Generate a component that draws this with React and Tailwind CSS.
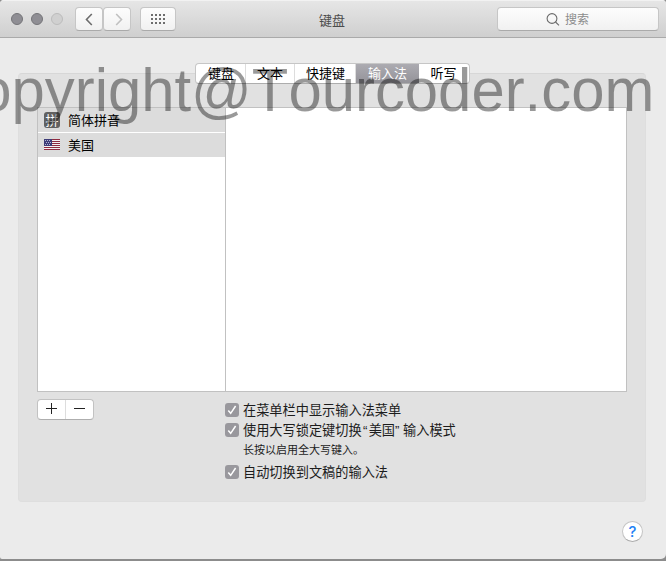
const buttonBase =
  'flex items-center justify-center rounded-[4px] border border-[#c6c6c6] border-b-[#aaaaaa] bg-gradient-to-b from-[#fdfdfd] to-[#f1f1f1]';

function Toolbar() {
  return (
    <header className="flex h-[38px] shrink-0 items-center border-t border-b border-t-[#f2f2f2] border-b-[#aaaaaa] bg-gradient-to-b from-[#e6e6e6] to-[#cfcfcf]">
      <div className="ml-[11px] flex gap-2">
        <span className="size-3 rounded-full border border-[#747478] bg-[#8f8e94]" />
        <span className="size-3 rounded-full border border-[#747478] bg-[#8f8e94]" />
        <span className="size-3 rounded-full border border-[#bcbcbc] bg-[#d0d0d0]" />
      </div>
      <div className="ml-3 flex">
        <button className={`${buttonBase} h-6 w-[28px]`}>
          <svg className="-ml-px" width="8" height="13" viewBox="0 0 8 13" fill="none" stroke="#6d6d6d" strokeWidth="1.6">
            <path d="M6.8 1L1.5 6.5L6.8 12" />
          </svg>
        </button>
        <button className={`${buttonBase} h-6 w-[28px]`}>
          <svg className="ml-[3px]" width="8" height="13" viewBox="0 0 8 13" fill="none" stroke="#c0c0c0" strokeWidth="1.6">
            <path d="M1.2 1L6.5 6.5L1.2 12" />
          </svg>
        </button>
      </div>
      <button className={`${buttonBase} ml-[9px] h-6 w-9`}>
        <svg width="14" height="10" viewBox="0 0 14 10" fill="#6d6d6d">
          {[0, 4, 8].map((y) => [0, 4, 8, 12].map((x) => <rect key={`${x}-${y}`} x={x} y={y} width="2" height="2" />))}
        </svg>
      </button>
      <h1 className="ml-[143px] flex-1 pt-[3px] text-[13px] leading-5 text-[#4c4c4c]">键盘</h1>
      <div className={`${buttonBase} mr-[7px] h-6 w-[162px] pr-[21px] text-[12px] text-[#8c8c8c]`}>
        <svg className="mr-[5px]" width="14" height="13" viewBox="0 0 14 13" fill="none" stroke="#6a6a6a" strokeWidth="1.1">
          <circle cx="6" cy="5.5" r="4.9" />
          <path d="M9.5 9L13 12.4" />
        </svg>
        <span className="pt-[2px]">搜索</span>
      </div>
    </header>
  );
}

function Tabs() {
  const cell = 'flex h-full items-center justify-center border-r border-[#dddddd]';
  return (
    <nav className="z-10 mx-auto flex h-[21px] w-[275px] shrink-0 overflow-hidden rounded-[4px] border border-[#c6c6c6] border-b-[#adadad] bg-white text-[13px]">
      <div className={`${cell} w-[50px] pl-[2px]`}>键盘</div>
      <div className={`${cell} w-[49px] pl-px`}>文本</div>
      <div className={`${cell} w-[61px] pl-[2px]`}>快捷键</div>
      <div className="flex h-full w-[63px] items-center justify-center bg-gradient-to-b from-[#acabb1] to-[#949399] pl-px text-white">输入法</div>
      <div className="flex h-full flex-1 items-center justify-center">听写</div>
    </nav>
  );
}

function PinyinIcon() {
  return (
    <span className="flex size-4 items-center justify-center rounded-[3px] bg-[#616161] pt-px text-[13px] leading-none text-white">拼</span>
  );
}

function FlagIcon() {
  return (
    <svg className="-mt-px" width="16" height="11" viewBox="0 0 16 11" shapeRendering="crispEdges">
      <rect width="16" height="11" fill="#f5f0f2" />
      {[0, 2, 4, 6, 8, 10].map((y) => <rect key={y} y={y} width="16" height="1" fill="#8f2b40" />)}
      <rect width="8" height="7" fill="#3d3c78" />
      {[[1, 1], [3, 1], [5, 1], [2, 3], [4, 3], [6, 3], [1, 5], [3, 5], [5, 5]].map(([x, y]) => (
        <rect key={`${x}-${y}`} x={x} y={y} width="1" height="1" fill="#b4b4d4" />
      ))}
    </svg>
  );
}

function Sources() {
  return (
    <div className="flex h-[285px] w-[590px] shrink-0 border border-[#c1c1c1] bg-white">
      <ul className="w-[188px] border-r border-[#c1c1c1] text-[13px]">
        <li className="flex h-[25px] items-center gap-2 border-b border-white bg-[#dcdcdc] pl-[6px]">
          <PinyinIcon />
          <span className="pt-[2px]">简体拼音</span>
        </li>
        <li className="flex h-6 items-center gap-2 bg-[#dcdcdc] pl-[6px]">
          <FlagIcon />
          <span className="pt-[2px]">美国</span>
        </li>
      </ul>
    </div>
  );
}

function Option({ children }) {
  return (
    <label className="flex h-5 items-center gap-1">
      <span className="flex size-[14px] items-center justify-center rounded-[3px] bg-[#99989d]">
        <svg width="10" height="10" viewBox="0 0 10 10" fill="none" stroke="white" strokeWidth="1.5">
          <path d="M1.3 5.4L3.7 8.3L8.6 1" />
        </svg>
      </span>
      <span className="whitespace-nowrap pt-[2px]">{children}</span>
    </label>
  );
}

export default function App() {
  return (
    <div className="relative h-[561px] w-[666px] overflow-hidden bg-[#8c8c8c] font-['Liberation_Sans','Noto_Sans_CJK_SC',sans-serif] text-black">
      <div className="flex h-[559px] flex-col overflow-hidden rounded-t-[4px] rounded-br-[5px] rounded-bl-[2px] bg-[#ebebeb]">
        <Toolbar />
        <main className="ml-[18px] mt-[25px] flex w-[628px] flex-col">
          <Tabs />
          <section className="-mt-[11px] flex h-[429px] flex-col rounded-[4px] border border-[#d7d7d7] border-x-[#dedede] border-b-[#dedede] bg-[#e1e1e1] pl-[18px] pt-[33px]">
            <Sources />
            <div className="mt-[7px] flex items-start">
              <div className="flex h-[21px] w-[57px] rounded-[4px] border border-[#c2c2c2] border-b-[#aeaeae] bg-white">
                <button className="flex w-[28px] items-center justify-center border-r border-[#dddddd]">
                  <svg className="-mt-[2px]" width="11" height="11" viewBox="0 0 11 11" stroke="#222"><path d="M0 5.5H11M5.5 0V11" /></svg>
                </button>
                <button className="flex flex-1 items-center justify-center">
                  <svg className="-mt-[2px]" width="11" height="11" viewBox="0 0 11 11" stroke="#222"><path d="M0 5.5H11" /></svg>
                </button>
              </div>
              <div className="ml-[131px] mt-px text-[13.2px] text-[#1c1c1c]">
                <Option>在菜单栏中显示输入法菜单</Option>
                <Option>使用大写锁定键切换<span className="inline-block w-[7px] text-center">“</span>美国<span className="inline-block w-[8px]">”</span>输入模式</Option>
                <p className="ml-[18px] h-[22px] text-[11px] leading-5">长按以启用全大写键入。</p>
                <Option>自动切换到文稿的输入法</Option>
              </div>
            </div>
          </section>
        </main>
        <button className="mr-[23px] mt-[19px] flex size-[21px] shrink-0 items-center justify-center self-end rounded-full border border-[#c4c4c4] border-b-[#aaaaaa] bg-white font-['Inter'] text-[15px] font-medium leading-none text-[#2381f5]">?</button>
      </div>
      <div className="pointer-events-none absolute left-[-65px] top-[56px] z-20 origin-[0_54px] scale-y-[1.03] whitespace-nowrap text-[59.85px] leading-[69px] text-black/40 [font-kerning:none]">Copyright@Tourcoder.com</div>
    </div>
  );
}
